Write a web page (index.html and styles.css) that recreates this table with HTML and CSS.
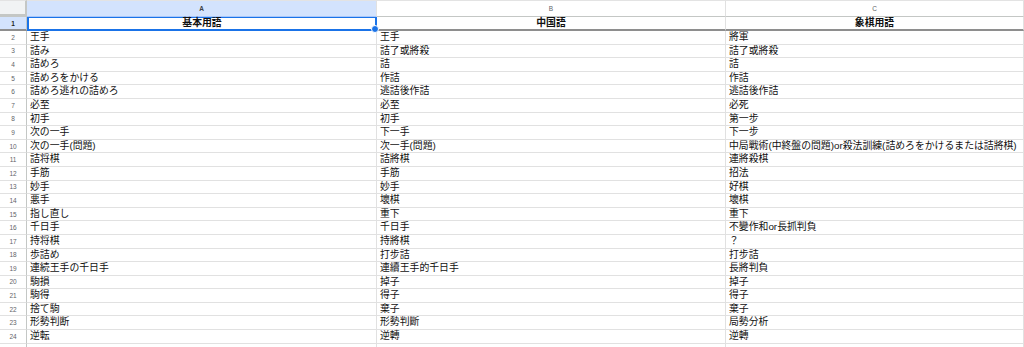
FILE: index.html
```html
<!DOCTYPE html>
<html lang="ja">
<head>
<meta charset="utf-8">
<link rel="stylesheet" href="styles.css">
</head>
<body>
<div class="sheet">
  <div class="row head">
    <div class="corner"></div>
    <div class="colh active">A</div>
    <div class="colh">B</div>
    <div class="colh">C</div>
  </div>
  <div class="row first">
    <div class="num active">1</div>
    <div class="cell bold sel">基本用語<span class="handle"></span></div>
    <div class="cell bold">中国語</div>
    <div class="cell bold">象棋用語</div>
  </div>
  <div class="row"><div class="num">2</div><div class="cell">王手</div><div class="cell">王手</div><div class="cell">將軍</div></div>
  <div class="row"><div class="num">3</div><div class="cell">詰み</div><div class="cell">詰了或將殺</div><div class="cell">詰了或將殺</div></div>
  <div class="row"><div class="num">4</div><div class="cell">詰めろ</div><div class="cell">詰</div><div class="cell">詰</div></div>
  <div class="row"><div class="num">5</div><div class="cell">詰めろをかける</div><div class="cell">作詰</div><div class="cell">作詰</div></div>
  <div class="row"><div class="num">6</div><div class="cell">詰めろ逃れの詰めろ</div><div class="cell">逃詰後作詰</div><div class="cell">逃詰後作詰</div></div>
  <div class="row"><div class="num">7</div><div class="cell">必至</div><div class="cell">必至</div><div class="cell">必死</div></div>
  <div class="row"><div class="num">8</div><div class="cell">初手</div><div class="cell">初手</div><div class="cell">第一步</div></div>
  <div class="row"><div class="num">9</div><div class="cell">次の一手</div><div class="cell">下一手</div><div class="cell">下一步</div></div>
  <div class="row"><div class="num">10</div><div class="cell">次の一手(問題)</div><div class="cell">次一手(問題)</div><div class="cell">中局戰術(中終盤の問題)or殺法訓練(詰めろをかけるまたは詰將棋)</div></div>
  <div class="row"><div class="num">11</div><div class="cell">詰将棋</div><div class="cell">詰將棋</div><div class="cell">連將殺棋</div></div>
  <div class="row"><div class="num">12</div><div class="cell">手筋</div><div class="cell">手筋</div><div class="cell">招法</div></div>
  <div class="row"><div class="num">13</div><div class="cell">妙手</div><div class="cell">妙手</div><div class="cell">好棋</div></div>
  <div class="row"><div class="num">14</div><div class="cell">悪手</div><div class="cell">壞棋</div><div class="cell">壞棋</div></div>
  <div class="row"><div class="num">15</div><div class="cell">指し直し</div><div class="cell">重下</div><div class="cell">重下</div></div>
  <div class="row"><div class="num">16</div><div class="cell">千日手</div><div class="cell">千日手</div><div class="cell">不變作和or長抓判負</div></div>
  <div class="row"><div class="num">17</div><div class="cell">持将棋</div><div class="cell">持將棋</div><div class="cell">？</div></div>
  <div class="row"><div class="num">18</div><div class="cell">歩詰め</div><div class="cell">打步詰</div><div class="cell">打步詰</div></div>
  <div class="row"><div class="num">19</div><div class="cell">連続王手の千日手</div><div class="cell">連續王手的千日手</div><div class="cell">長將判負</div></div>
  <div class="row"><div class="num">20</div><div class="cell">駒損</div><div class="cell">掉子</div><div class="cell">掉子</div></div>
  <div class="row"><div class="num">21</div><div class="cell">駒得</div><div class="cell">得子</div><div class="cell">得子</div></div>
  <div class="row"><div class="num">22</div><div class="cell">捨て駒</div><div class="cell">棄子</div><div class="cell">棄子</div></div>
  <div class="row"><div class="num">23</div><div class="cell">形勢判断</div><div class="cell">形勢判斷</div><div class="cell">局勢分析</div></div>
  <div class="row"><div class="num">24</div><div class="cell">逆転</div><div class="cell">逆轉</div><div class="cell">逆轉</div></div>
  <div class="row"><div class="num"></div><div class="cell"></div><div class="cell"></div><div class="cell"></div></div>
</div>
</body>
</html>
```
FILE: styles.css
```css
html, body {
  margin: 0;
  padding: 0;
  background: #fff;
  overflow: hidden;
}
.sheet {
  width: 1024px;
  font-family: "Liberation Sans", "Noto Sans CJK JP", sans-serif;
  color: #1f1f1f;
}
.row {
  display: grid;
  grid-template-columns: 27px 350px 349px 1fr;
  height: 13.6px;
}
.row.head {
  height: 17px;
}
.row.first {
  height: 14px;
}
.corner {
  background: #f1f3f4;
  border-right: 2px solid #c4c7c5;
  border-bottom: 3px solid #c4c7c5;
  border-top: 1px solid #e3e3e3;
  box-sizing: border-box;
}
.colh {
  box-sizing: border-box;
  border-top: 1px solid #e3e3e3;
  border-right: 1px solid #e1e1e1;
  border-bottom: 1px solid #c4c7c5;
  font-size: 6.5px;
  color: #5f6368;
  display: flex;
  align-items: center;
  justify-content: center;
  background: #fff;
}
.colh.active {
  background: #d3e3fd;
  color: #3c4043;
  font-weight: bold;
  border-bottom-color: #a8c7fa;
}
.num {
  box-sizing: border-box;
  border-right: 1px solid #c4c7c5;
  border-bottom: 1px solid #e1e1e1;
  font-size: 6.5px;
  color: #5f6368;
  display: flex;
  align-items: center;
  justify-content: center;
  background: #fff;
}
.num.active {
  background: #d3e3fd;
  color: #1f1f1f;
  font-weight: bold;
}
.cell {
  box-sizing: border-box;
  border-right: 1px solid #e1e1e1;
  border-bottom: 1px solid #e1e1e1;
  font-size: 9.85px;
  line-height: 12px;
  padding-left: 3px;
  white-space: nowrap;
  overflow: visible;
  color: #111;
}
.cell.bold {
  font-weight: bold;
  text-align: center;
  padding-left: 0;
}
.first .cell {
  border-bottom: 2px solid #8e8e8e;
}
.first .num {
  border-bottom: 2px solid #8e8e8e;
}
.cell.sel {
  position: relative;
  border: 2px solid #1a73e8;
  border-top: 1px solid #1a73e8;
  line-height: 10px;
}
.handle {
  position: absolute;
  right: -4px;
  bottom: -4px;
  width: 6px;
  height: 6px;
  border-radius: 50%;
  background: #1a73e8;
  border: 1px solid #fff;
}
```
